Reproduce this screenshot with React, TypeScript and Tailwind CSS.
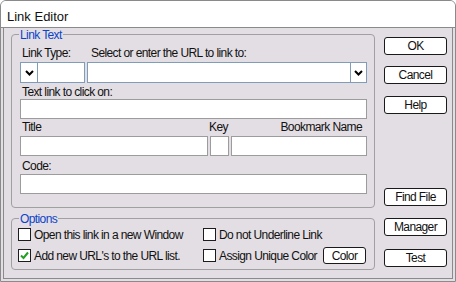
import React from "react";

const inputClass = "h-[20px] border border-[#9c9c9c] bg-white";
const btnClass = "h-[18px] w-[63px] flex items-center justify-center bg-white border border-[#1a1a1a] rounded-[3px]";

function Chevron() {
  return (
    <svg width="9" height="6" viewBox="0 0 9 6">
      <path d="M1 1 L4.5 4.5 L8 1" fill="none" stroke="#000" strokeWidth="2" />
    </svg>
  );
}

function Check({ checked, label }: { checked?: boolean; label: string }) {
  return (
    <div className="flex items-center">
      <div className="w-[13px] h-[13px] border border-[#1c1c1c] bg-white flex items-center justify-center">
        {checked && (
          <svg width="9" height="9" viewBox="0 0 9 9">
            <path d="M1 4.5 L3.5 7 L8 1.5" fill="none" stroke="#22a022" strokeWidth="2" />
          </svg>
        )}
      </div>
      <span className="ml-[3px] whitespace-nowrap">{label}</span>
    </div>
  );
}

export default function App() {
  return (
    <div className="w-[456px] h-[282px] flex flex-col bg-[#e3dee3] border border-[#8a8a8a] rounded-t-[6px] overflow-hidden text-[12px] leading-[14px] tracking-[-0.6px] text-[#111] font-['Liberation_Sans',Arial,sans-serif]">
      <div className="h-[27px] shrink-0 bg-white border-b border-[#8a8a8a] pl-[6px] pt-[8px] text-[13px] leading-[15px] tracking-normal">
        Link Editor
      </div>

      <div className="flex-1 px-[2px] pb-[2px] flex">
        <div className="flex-1 border-x border-b border-[#8a8a8a] flex">
          {/* left column */}
          <div className="pl-[7px] pt-[6px]">
            <div className="relative w-[364px] h-[174px] border border-[#a0a0a0] rounded-[4px] pt-[11px] pl-[8px] pr-[7px]">
              <span className="absolute left-[7px] top-[-7px] px-[1px] bg-[#e3dee3] text-[#0b44c9]">Link Text</span>

              <div className="flex h-[14px]">
                <div className="w-[67px] pl-[2px]">Link Type:</div>
                <div className="pl-[4px]">Select or enter the URL to link to:</div>
              </div>
              <div className="mt-[2px] flex gap-[2px] h-[21px]">
                <div className="w-[65px] border border-[#7f9db9] bg-white flex">
                  <div className="w-[17px] border-r border-[#7f9db9] flex items-center justify-center">
                    <Chevron />
                  </div>
                </div>
                <div className="flex-1 border border-[#7f9db9] bg-white flex justify-end">
                  <div className="w-[16px] border-l border-[#7f9db9] flex items-center justify-center">
                    <Chevron />
                  </div>
                </div>
              </div>

              <div className="mt-[2px] pl-[2px] h-[14px]">Text link to click on:</div>
              <div className={inputClass} />

              <div className="mt-[1px] flex h-[14px]">
                <div className="w-[189px] pl-[2px]">Title</div>
                <div className="w-[22px]">Key</div>
                <div className="flex-1 text-right pr-[5px]">Bookmark Name</div>
              </div>
              <div className="mt-[2px] flex gap-[2px]">
                <div className={`${inputClass} w-[188px]`} />
                <div className={`${inputClass} w-[19px]`} />
                <div className={`${inputClass} flex-1`} />
              </div>

              <div className="mt-[3px] pl-[2px] h-[14px]">Code:</div>
              <div className={`${inputClass} mt-[1px]`} />
            </div>

            <div className="relative mt-[10px] w-[364px] h-[52px] border border-[#a0a0a0] rounded-[4px] pt-[9px] pl-[6px] pr-[8px]">
              <span className="absolute left-[7px] top-[-7px] px-[1px] bg-[#e3dee3] text-[#0b44c9]">Options</span>
              <div className="flex h-[13px] items-center">
                <div className="w-[185px]">
                  <Check label="Open this link in a new Window" />
                </div>
                <Check label="Do not Underline Link" />
              </div>
              <div className="mt-[8px] flex h-[13px] items-center">
                <div className="w-[185px]">
                  <Check checked label="Add new URL's to the URL list." />
                </div>
                <Check label="Assign Unique Color" />
                <div className="ml-auto h-[17px] w-[43px] flex items-center justify-center bg-white border border-[#1a1a1a] rounded-[3px]">
                  Color
                </div>
              </div>
            </div>
          </div>

          {/* right buttons */}
          <div className="ml-[9px] pt-[9px] flex flex-col">
            <div className={btnClass}>OK</div>
            <div className={`${btnClass} mt-[11px]`}>Cancel</div>
            <div className={`${btnClass} mt-[12px]`}>Help</div>
            <div className={`${btnClass} mt-[74px]`}>Find File</div>
            <div className={`${btnClass} mt-[12px]`}>Manager</div>
            <div className={`${btnClass} mt-[13px]`}>Test</div>
          </div>
        </div>
      </div>
    </div>
  );
}
